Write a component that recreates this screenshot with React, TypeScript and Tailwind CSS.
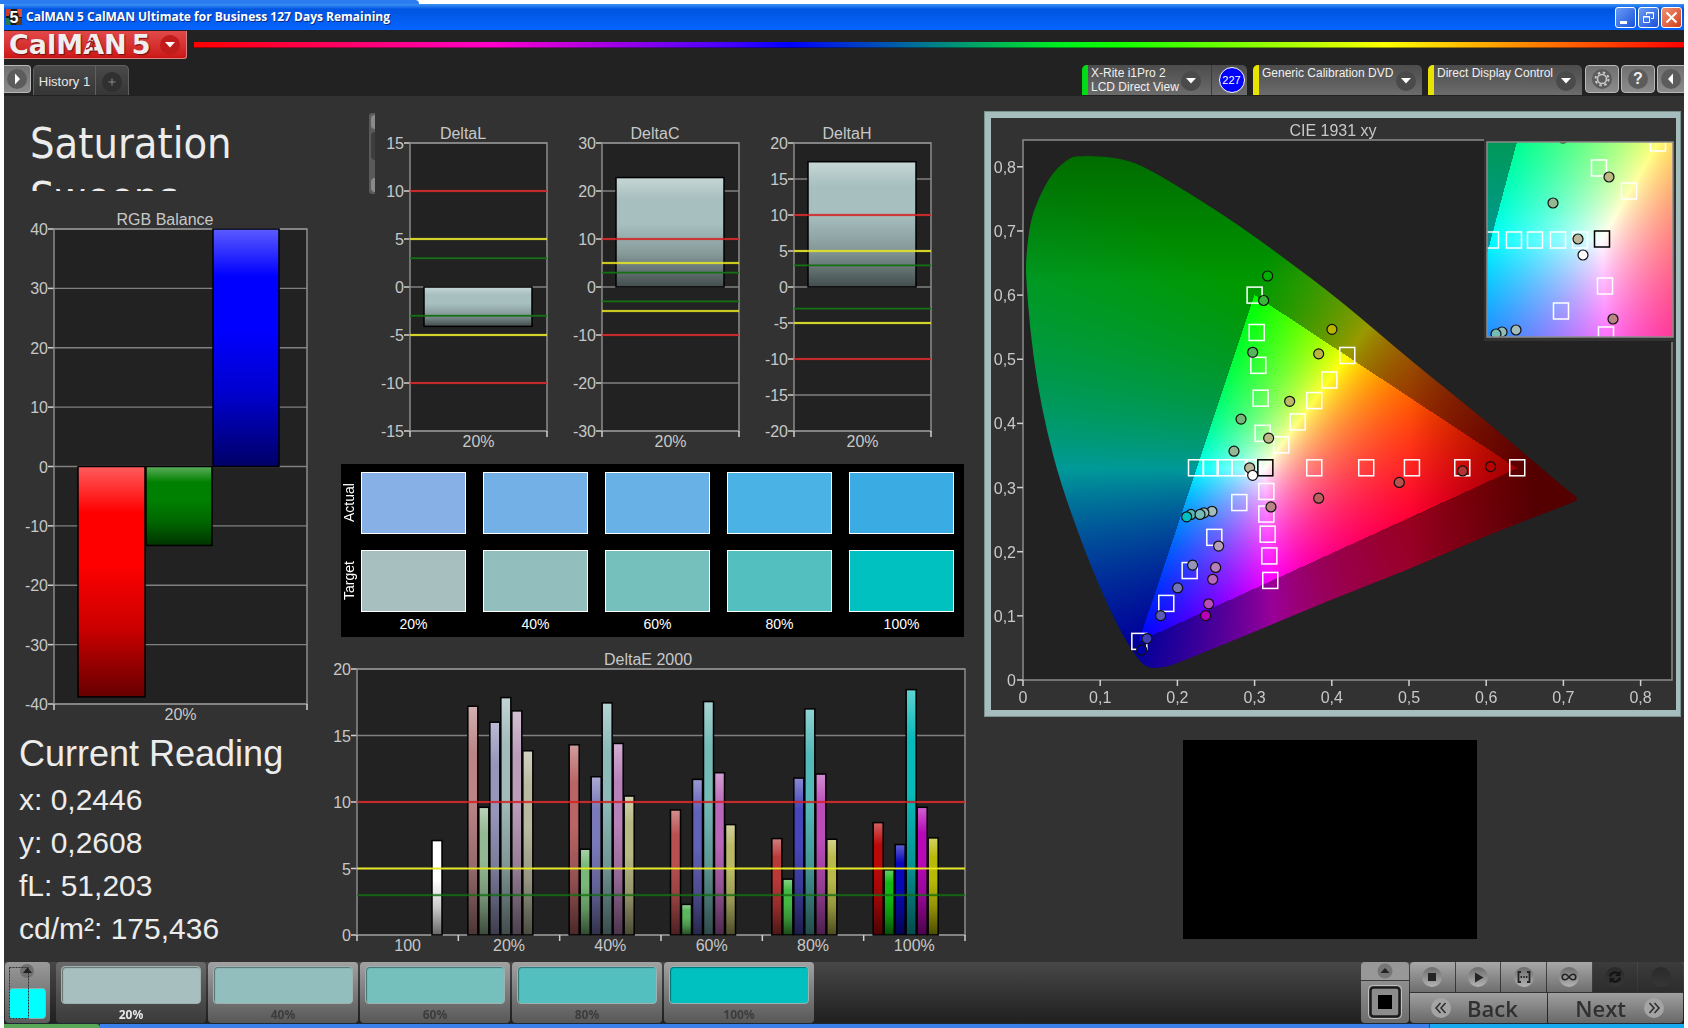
import React, { useEffect, useRef } from 'react';
import clsx from 'clsx';

type Bar = { x: number; width: number; value: number; color: string };

type ChartProps = {
  id: string;
  title: string;
  titleX: number;
  width: number;
  height: number;
  plot: { x: number; y: number; w: number; h: number };
  min: number;
  max: number;
  step: number;
  categories: string[];
  bars: Bar[];
  limits?: number[];
};

const LIMIT_COLORS: Record<number, string> = {
  10: '#d42020',
  5: '#e8e820',
  3: '#157015',
};

const BarChart: React.FC<ChartProps> = ({
  id,
  title,
  titleX,
  width,
  height,
  plot,
  min,
  max,
  step,
  categories,
  bars,
  limits = [],
}) => {
  const toY = (value: number) => plot.y + ((max - value) / (max - min)) * plot.h;
  const bottom = plot.y + plot.h;
  const right = plot.x + plot.w;
  const slot = plot.w / categories.length;

  const ticks: number[] = [];
  for (let v = min; v <= max; v += step) ticks.push(v);

  return (
    <svg viewBox={`0 0 ${width} ${height}`} className="block w-full" role="img" aria-label={title}>
      <defs>
        <linearGradient id={id} x1="0" y1="0" x2="0" y2="1">
          <stop offset="0" stopColor="#fff" stopOpacity="0.36" />
          <stop offset="0.2" stopColor="#fff" stopOpacity="0" />
          <stop offset="0.42" stopColor="#000" stopOpacity="0" />
          <stop offset="0.7" stopColor="#000" stopOpacity="0.2" />
          <stop offset="1" stopColor="#000" stopOpacity="0.6" />
        </linearGradient>
      </defs>
      <text x={titleX} y={plot.y - 4} textAnchor="middle" className="fill-[#c8c8c8] text-base">
        {title}
      </text>
      <rect x={plot.x} y={plot.y} width={plot.w} height={plot.h} fill="#222" />
      {ticks.map((v) => (
        <g key={v}>
          <line x1={plot.x} x2={right} y1={toY(v)} y2={toY(v)} stroke="#808080" strokeWidth="1.3" />
          <line x1={plot.x - 6} x2={plot.x} y1={toY(v)} y2={toY(v)} stroke="#d0d0d0" strokeWidth="1.5" />
          <text x={plot.x - 6} y={toY(v) + 6} textAnchor="end" className="fill-[#c8c8c8] text-base">
            {v}
          </text>
        </g>
      ))}
      <rect x={plot.x} y={plot.y} width={plot.w} height={plot.h} fill="none" stroke="#8c8c8c" strokeWidth="1.5" />
      {bars.map((bar, i) => {
        const top = toY(Math.max(bar.value, 0));
        const h = Math.abs(toY(bar.value) - toY(0));
        return (
          <g key={i}>
            <rect x={bar.x} y={top} width={bar.width} height={h} fill={bar.color} />
            <rect x={bar.x} y={top} width={bar.width} height={h} fill={`url(#${id})`} stroke="#000" strokeWidth="1.5" />
          </g>
        );
      })}
      {limits.map((v) => (
        <g key={v}>
          <line x1={plot.x} x2={right} y1={toY(v)} y2={toY(v)} stroke={LIMIT_COLORS[Math.abs(v)]} strokeWidth="2.6" strokeOpacity="0.35" />
          <line x1={plot.x} x2={right} y1={toY(v)} y2={toY(v)} stroke={LIMIT_COLORS[Math.abs(v)]} strokeWidth="1.4" />
        </g>
      ))}
      {categories.map((label, i) => (
        <g key={label}>
          <line x1={plot.x + slot * i} x2={plot.x + slot * i} y1={bottom} y2={bottom + 6} stroke="#d0d0d0" strokeWidth="1.5" />
          <text x={plot.x + slot * (i + 0.5)} y={bottom + 16} textAnchor="middle" className="fill-[#c8c8c8] text-base">
            {label}
          </text>
        </g>
      ))}
      <line x1={right} x2={right} y1={bottom} y2={bottom + 6} stroke="#d0d0d0" strokeWidth="1.5" />
    </svg>
  );
};

const RGB_BARS: Bar[] = [
  { x: 74, width: 67, value: -38.8, color: '#ff0000' },
  { x: 142, width: 66, value: -13.3, color: '#008000' },
  { x: 209, width: 66, value: 40, color: '#0000ff' },
];

const DELTAS = [
  { title: 'DeltaL', min: -15, max: 15, step: 5, value: -4.1, limits: [10, 5, 3, -3, -5, -10] },
  { title: 'DeltaC', min: -30, max: 30, step: 10, value: 22.8, limits: [10, 5, 3, -3, -5, -10] },
  { title: 'DeltaH', min: -20, max: 20, step: 5, value: 17.4, limits: [10, 5, 3, -3, -5, -10] },
];

// one row per saturation level: red, green, blue, cyan, magenta, yellow
const DELTA_E = [
  [17.2, 9.6, 16, 17.85, 16.85, 13.85],
  [14.3, 6.45, 11.9, 17.45, 14.4, 10.45],
  [9.4, 2.3, 11.7, 17.55, 12.2, 8.3],
  [7.25, 4.2, 11.8, 17, 12.1, 7.2],
  [8.45, 4.9, 6.8, 18.45, 9.6, 7.3],
];

const DELTA_E_COLORS = [
  ['#bb8585', '#94b894', '#9696bb', '#a2bbbb', '#b99db9', '#b9b9a0'],
  ['#b96565', '#78b878', '#7a7ab9', '#8dbab9', '#b981b9', '#b9b984'],
  ['#b95050', '#5cb85c', '#6262b9', '#74bab7', '#b968b9', '#b9b968'],
  ['#b93838', '#44b844', '#4646b9', '#54bab9', '#b94cb9', '#b9b94c'],
  ['#b90808', '#10b810', '#0808b9', '#08bab9', '#b908b9', '#b9b908'],
];

const E_SLOT = 608 / 6;
const DELTA_E_BARS: Bar[] = [
  { x: 103, width: 10, value: 7.1, color: '#ffffff' },
  ...DELTA_E.flatMap((row, level) =>
    row.map((value, i) => ({
      x: 28 + E_SLOT * (level + 1) + 9.5 + i * 11,
      width: 10,
      value,
      color: DELTA_E_COLORS[level][i],
    }))
  ),
];

const LEVELS = ['20%', '40%', '60%', '80%', '100%'];
const ACTUAL = ['bg-[#86b0e6]', 'bg-[#73b0e6]', 'bg-[#67b1e6]', 'bg-[#4ab2e5]', 'bg-[#3aace3]'];
const TARGET = ['bg-[#a7bfbe]', 'bg-[#92bfbe]', 'bg-[#75bfbd]', 'bg-[#53bfbf]', 'bg-[#00c0c0]'];

/* ---------- CIE 1931 chart ---------- */

const CIE_W = 685;
const CIE_H = 592;
const PLOT = { x: 32, y: 22, w: 650, h: 540 };
const INSET = { x: 496, y: 24, w: 186, h: 195 };
const X_SCALE = 772;
const Y_SCALE = 641.5;

const cieX = (x: number) => PLOT.x + x * X_SCALE;
const cieY = (y: number) => PLOT.y + PLOT.h - y * Y_SCALE;

// spectral locus outline, in plot pixels
const LOCUS = [
  [47, 17], [57, 16], [74, 16], [101, 19], [124, 28], [171, 56], [217, 86], [257, 115], [317, 160],
  [387, 220], [467, 284], [545, 351], [557, 359], [546, 364], [467, 394], [387, 429], [307, 460],
  [224, 495], [157, 522], [141, 528], [124, 528], [115, 519], [97, 491], [76, 446], [57, 398],
  [37, 341], [24, 292], [14, 242], [7, 189], [3, 138], [3, 118], [7, 82], [16, 57], [29, 33],
];

const RED = [0.64, 0.33];
const GREEN = [0.3, 0.6];
const BLUE = [0.15, 0.06];

const side = (a: number[], b: number[], x: number, y: number) =>
  (b[0] - a[0]) * (y - a[1]) - (b[1] - a[1]) * (x - a[0]);

function cieColor(x: number, y: number): [number, number, number] {
  const yy = Math.max(y, 0.001);
  const X = x / yy;
  const Z = (1 - x - yy) / yy;
  const r = Math.max(0, 3.2406 * X - 1.5372 - 0.4986 * Z);
  const g = Math.max(0, -0.9689 * X + 1.8758 + 0.0415 * Z);
  const b = Math.max(0, 0.0557 * X - 0.204 + 1.057 * Z);
  const peak = Math.max(r, g, b, 0.0001);
  const inside =
    side(RED, GREEN, x, y) >= 0 && side(GREEN, BLUE, x, y) >= 0 && side(BLUE, RED, x, y) >= 0;
  let level = inside ? 255 : 153;
  level *= 1 - Math.min(1, Math.max(0, (x - 0.5) / 0.16)) * 0.45;
  level *= 1 - Math.min(1, Math.max(0, (y - 0.62) / 0.2)) * 0.3;
  return [(r / peak) * level, (g / peak) * level, (b / peak) * level];
}

function gamut(w: number, h: number, toXy: (px: number, py: number) => [number, number]) {
  const layer = document.createElement('canvas');
  layer.width = w;
  layer.height = h;
  const ctx = layer.getContext('2d')!;
  const image = ctx.createImageData(w, h);
  for (let py = 0; py < h; py++) {
    for (let px = 0; px < w; px++) {
      const [x, y] = toXy(px + 0.5, py + 0.5);
      const [r, g, b] = cieColor(x, y);
      const i = (py * w + px) * 4;
      image.data[i] = r;
      image.data[i + 1] = g;
      image.data[i + 2] = b;
      image.data[i + 3] = 255;
    }
  }
  ctx.putImageData(image, 0, 0);
  return layer;
}

function paintCie(canvas: HTMLCanvasElement) {
  const ctx = canvas.getContext('2d')!;
  ctx.clearRect(0, 0, CIE_W, CIE_H);
  ctx.fillStyle = '#222';
  ctx.fillRect(PLOT.x, PLOT.y, PLOT.w, PLOT.h);

  const full = gamut(PLOT.w, PLOT.h, (px, py) => [px / X_SCALE, (PLOT.h - py) / Y_SCALE]);
  ctx.save();
  ctx.translate(PLOT.x, PLOT.y);
  ctx.beginPath();
  LOCUS.forEach(([px, py], i) => {
    const [nx, ny] = LOCUS[(i + 1) % LOCUS.length];
    const mx = (px + nx) / 2;
    const my = (py + ny) / 2;
    if (i === 0) ctx.moveTo(mx, my);
    else ctx.quadraticCurveTo(px, py, mx, my);
  });
  ctx.quadraticCurveTo(LOCUS[0][0], LOCUS[0][1], (LOCUS[0][0] + LOCUS[1][0]) / 2, (LOCUS[0][1] + LOCUS[1][1]) / 2);
  ctx.clip();
  ctx.drawImage(full, 0, 0);
  ctx.restore();
}

function paintInset(canvas: HTMLCanvasElement) {
  const ctx = canvas.getContext('2d')!;
  const zoomed = gamut(INSET.w, INSET.h, (px, py) => [
    0.3127 + (px + INSET.x - 611) / 1262,
    0.329 - (py + INSET.y - 121) / 1310,
  ]);
  ctx.fillStyle = '#323232';
  ctx.fillRect(INSET.x - 3, INSET.y - 4, INSET.w + 6, INSET.h + 8);
  ctx.drawImage(zoomed, INSET.x, INSET.y);
}

const TARGETS = [
  [0.3, 0.6], [0.3027, 0.5417], [0.3048, 0.4905], [0.3078, 0.4393], [0.3104, 0.3845],
  [0.42, 0.5059], [0.3968, 0.4677], [0.3773, 0.4356], [0.3558, 0.4023], [0.3346, 0.3666],
  [0.2241, 0.3308], [0.2431, 0.3308], [0.2612, 0.3308], [0.2802, 0.3308], [0.298, 0.3308],
  [0.3773, 0.3308], [0.4446, 0.3308], [0.5038, 0.3308], [0.569, 0.3308], [0.6402, 0.3308],
  [0.3152, 0.2939], [0.3152, 0.2587], [0.3169, 0.2273], [0.3191, 0.1934], [0.3203, 0.1552],
  [0.2802, 0.2766], [0.2478, 0.2224], [0.2159, 0.1706], [0.1856, 0.1194], [0.1507, 0.0602],
];

const READINGS: [number, number, string][] = [
  [0.3169, 0.6298, '#00b000'], [0.3117, 0.5916, '#38b838'], [0.2975, 0.5108, '#58b458'],
  [0.2824, 0.4067, '#78b478'], [0.2733, 0.3567, '#94b894'],
  [0.4002, 0.5466, '#b8b400'], [0.383, 0.5084, '#b8b444'], [0.3454, 0.4344, '#bcb868'],
  [0.3182, 0.3771, '#bcb884'], [0.2936, 0.3308, '#bcb89c'], [0.2975, 0.3191, '#ffffff'],
  [0.2448, 0.263, '#a4bcbc'], [0.2344, 0.2606, '#90bcbc'], [0.2176, 0.2581, '#54b8b8'],
  [0.2293, 0.2581, '#74bcb8'], [0.212, 0.2544, '#00c0c0'],
  [0.3212, 0.2698, '#b88484'], [0.383, 0.2834, '#b86060'], [0.4874, 0.308, '#b85050'],
  [0.5694, 0.3259, '#b03434'], [0.6057, 0.3327, '#b80000'],
  [0.2534, 0.2088, '#b8a0b8'], [0.2495, 0.1755, '#b880b8'], [0.2457, 0.157, '#b868b8'],
  [0.2405, 0.1188, '#b84cb8'], [0.2366, 0.1003, '#b800b8'],
  [0.2197, 0.1792, '#9494b8'], [0.2003, 0.1435, '#7474b8'], [0.1783, 0.1003, '#5c5cb8'],
  [0.1606, 0.0646, '#4040b8'], [0.1537, 0.0467, '#0000a8'],
];

const INSET_TARGETS = [
  [667, 25], [608, 50], [638, 73], [500, 122], [523, 122], [544, 122], [567, 122], [589, 122],
  [614, 168], [570, 193], [615, 217],
];

const INSET_READINGS: [number, number, string][] = [
  [572, 20, '#78b478'], [618, 59, '#bcb884'], [562, 85, '#94b894'], [587, 121, '#bcb89c'],
  [592, 137, '#ffffff'], [622, 201, '#b88484'], [525, 212, '#a4bcbc'], [511, 214, '#90bcbc'],
  [505, 216, '#74bcb8'],
];

const Target: React.FC<{ x: number; y: number; color?: string }> = ({ x, y, color = '#fff' }) => (
  <rect x={x - 7.5} y={y - 8} width="15" height="16" fill="none" stroke={color} strokeWidth="1.5" />
);

const Reading: React.FC<{ x: number; y: number; color: string }> = ({ x, y, color }) => (
  <circle cx={x} cy={y} r="5" fill={color} stroke="#101010" strokeWidth="1.2" />
);

const TENTHS = [0, 1, 2, 3, 4, 5, 6, 7, 8];
const tenthLabel = (n: number) => (n === 0 ? '0' : `0,${n}`);

const CieChart: React.FC = () => {
  const canvasRef = useRef<HTMLCanvasElement>(null);

  useEffect(() => {
    if (!canvasRef.current) return;
    paintCie(canvasRef.current);
    paintInset(canvasRef.current);
  }, []);

  return (
    <div className="grid">
      <canvas ref={canvasRef} width={CIE_W} height={CIE_H} className="[grid-area:1/1] w-full" />
      <svg viewBox={`0 0 ${CIE_W} ${CIE_H}`} className="[grid-area:1/1] w-full" role="img" aria-label="CIE 1931 xy">
        <defs>
          <clipPath id="inset-clip">
            <rect x={INSET.x} y={INSET.y} width={INSET.w} height={INSET.h} />
          </clipPath>
        </defs>
        <text x="342" y="18" textAnchor="middle" className="fill-[#c8c8c8] text-base">
          CIE 1931 xy
        </text>
        <path
          d={`M${INSET.x - 3} ${PLOT.y}H${PLOT.x}V${PLOT.y + PLOT.h}H${PLOT.x + PLOT.w - 1}V${INSET.y + INSET.h + 5}`}
          fill="none"
          stroke="#8c8c8c"
          strokeWidth="1.5"
        />
        {TENTHS.map((n) => (
          <g key={n} className="fill-[#c8c8c8] text-base">
            <line x1={PLOT.x - 6} x2={PLOT.x} y1={cieY(n / 10)} y2={cieY(n / 10)} stroke="#d0d0d0" strokeWidth="1.5" />
            <text x={PLOT.x - 7} y={cieY(n / 10) + 6} textAnchor="end">
              {tenthLabel(n)}
            </text>
            <line x1={cieX(n / 10)} x2={cieX(n / 10)} y1={PLOT.y + PLOT.h} y2={PLOT.y + PLOT.h + 6} stroke="#d0d0d0" strokeWidth="1.5" />
            <text x={cieX(n / 10)} y={PLOT.y + PLOT.h + 23} textAnchor="middle">
              {tenthLabel(n)}
            </text>
          </g>
        ))}
        {TARGETS.map(([x, y], i) => (
          <Target key={i} x={cieX(x)} y={cieY(y)} />
        ))}
        <Target x={cieX(0.3139)} y={cieY(0.3308)} color="#000" />
        {READINGS.map(([x, y, color], i) => (
          <Reading key={i} x={cieX(x)} y={cieY(y)} color={color} />
        ))}
        <g clipPath="url(#inset-clip)">
          {INSET_TARGETS.map(([x, y], i) => (
            <Target key={i} x={x} y={y} />
          ))}
          <Target x={611} y={121} color="#000" />
          {INSET_READINGS.map(([x, y, color], i) => (
            <Reading key={i} x={x} y={y} color={color} />
          ))}
        </g>
        <rect x={INSET.x} y={INSET.y} width={INSET.w} height={INSET.h} fill="none" stroke="#8c8c8c" strokeWidth="1.5" />
      </svg>
    </div>
  );
};

/* ---------- window chrome ---------- */

const TitleBar: React.FC = () => (
  <div className="flex h-[26px] items-center bg-linear-to-b from-[#3c92f5] via-[#0055e0] via-20% to-[#0665ff] px-0.5">
    <svg viewBox="0 0 16 16" className="h-4 w-4">
      <rect width="16" height="16" fill="#181818" />
      <path d="M0 0h5l-2 7H0z" fill="#d23a20" />
      <path d="M11 0h5v8h-3z" fill="#e05030" />
      <path d="M0 9h3l2 7H0z" fill="#287a48" />
      <path d="M13 9h3v7h-6z" fill="#5a3a20" />
      <text x="8" y="14" textAnchor="middle" className="fill-white text-base font-bold">
        5
      </text>
    </svg>
    <h1 className="ml-1 flex-1 text-xs font-bold text-white font-['Open_Sans',sans-serif] [text-shadow:1px_1px_0_#0a2a80]">
      CalMAN 5 CalMAN Ultimate for Business 127 Days Remaining
    </h1>
    <div className="flex gap-0.5">
      <button aria-label="Minimize" className="flex h-[21px] w-[21px] rounded-[3px] border border-white bg-linear-to-br from-[#6a9bf5] to-[#1c50d8]">
        <svg viewBox="0 0 19 19">
          <path d="M4 13h7v3H4z" fill="#fff" />
        </svg>
      </button>
      <button aria-label="Restore" className="flex h-[21px] w-[21px] rounded-[3px] border border-white bg-linear-to-br from-[#6a9bf5] to-[#1c50d8]">
        <svg viewBox="0 0 19 19" fill="none" stroke="#fff">
          <path d="M7.5 7V4.500h7v6H12M7 5h8" />
          <path d="M4.500 8.500h6v6h-6zM4 9h7" />
        </svg>
      </button>
      <button aria-label="Close" className="flex h-[21px] w-[21px] rounded-[3px] border border-white bg-linear-to-br from-[#f09070] to-[#d03c14]">
        <svg viewBox="0 0 19 19" stroke="#fff" strokeWidth="2">
          <path d="M4.500 4.500l10 10M14.500 4.500l-10 10" />
        </svg>
      </button>
    </div>
  </div>
);

const Caret: React.FC<{ className?: string }> = ({ className }) => (
  <span className={clsx('flex h-5 w-5 shrink-0 items-center justify-center rounded-full', className)}>
    <svg viewBox="0 0 12 6" className="h-1.5 w-3">
      <path d="M1 0h10L6 5.500z" fill="#fff" />
    </svg>
  </span>
);

const LogoRow: React.FC = () => (
  <div className="flex h-[35px] items-start">
    <button
      aria-label="CalMAN menu"
      className="mt-px flex h-7 w-[183px] items-center justify-between rounded-br-[3px] border-r border-b border-[#d88080] bg-linear-to-b from-[#e04848] to-[#cc1414] pr-1.5 pl-[5px]"
    >
      <span className="relative text-[27px] leading-6 font-bold text-[#f0eeee] font-['DejaVu_Sans',sans-serif] [text-shadow:1px_1px_1px_#701010]">
        CalMAN
        <svg viewBox="0 0 12 14" className="absolute top-1 left-[76px] h-3.5 w-3" fill="none" stroke="#a01818" strokeWidth="1.5">
          <circle cx="7" cy="2" r="1.400" fill="#a01818" stroke="none" />
          <path d="M2 6l3-2 2 1 3 2M6.500 5L5.500 8.500l3 2v3M5.500 8.500L4 11l-3 1" />
        </svg>
      </span>
      <span className="mr-auto ml-[5px] text-[27px] leading-6 font-bold text-[#f0eeee] font-['DejaVu_Sans',sans-serif] [text-shadow:1px_1px_1px_#701010]">
        5
      </span>
      <Caret className="bg-[#c01c1c]" />
    </button>
    <div className="mt-3 ml-[7px] h-1.5 flex-1 border-b border-black/40 bg-[linear-gradient(to_right,#f00,#f0c_20%,#40f_36%,#00f_40%,#0e2_58%,#1f0_62%,#ff0_80%,#f00)]" />
  </div>
);

type SourceProps = { label: string; second?: string; stripe: string; className: string; children?: React.ReactNode };

const SourceTab: React.FC<SourceProps> = ({ label, second, stripe, className, children }) => (
  <div className={clsx('flex h-[30px] overflow-hidden rounded-t-[5px] bg-linear-to-b from-[#4c4c4c] to-[#6c6c6c]', className)}>
    <span className={clsx('w-1.5 shrink-0', stripe)} />
    <button
      aria-haspopup="menu"
      className={clsx('flex flex-1 justify-between pl-[3px] text-left text-xs text-[#f0f0f0]', children ? 'pr-2.5' : 'pr-1.5')}
    >
      <span className="pt-px leading-[14px] whitespace-nowrap">
        {label}
        {second && <span className="block">{second}</span>}
      </span>
      <Caret className="mt-1.5 -ml-2 self-start bg-[#4a4a4a]" />
    </button>
    {children}
  </div>
);

const ToolButton: React.FC<{ label: string; className?: string; children: React.ReactNode }> = ({ label, className, children }) => (
  <button
    aria-label={label}
    className={clsx('flex h-7 items-center justify-center border border-[#b8b8b8] bg-linear-to-b from-[#707070] to-[#8c8c8c]', className)}
  >
    <span className="flex h-5 w-5 items-center justify-center rounded-full bg-[#5c5c5c]">{children}</span>
  </button>
);

const TabRow: React.FC = () => (
  <div className="flex h-[31px] items-start">
    <ToolButton label="Show workflow" className="w-[27px] rounded-r border-l-0">
      <svg viewBox="0 0 8 12" className="h-3 w-2">
        <path d="M2 0.500v11l5-5.500z" fill="#fff" />
      </svg>
    </ToolButton>
    <div className="ml-0.5 flex h-[30px] rounded-t-[5px] border border-b-0 border-[#606060] bg-linear-to-b from-[#4a4a4a] to-[#363636]">
      <button className="w-[62px] border-r border-[#606060] pt-0.5 text-[13px] text-[#e8e8e8]">History 1</button>
      <button aria-label="Add history" className="flex w-8 items-center justify-center pt-0.5">
        <svg viewBox="0 0 20 20" className="h-5 w-5">
          <circle cx="10" cy="10" r="10" fill="#303030" />
          <path d="M6.500 10h7M10 6.500v7" stroke="#888" />
        </svg>
      </button>
    </div>
    <div className="ml-auto flex">
      <SourceTab label="X-Rite i1Pro 2" second="LCD Direct View" stripe="bg-[#00dc14]" className="w-[165px]">
        <span className="flex w-9 items-center justify-center border-l border-[#3c3c3c] pl-1">
          <span className="flex h-[26px] w-[26px] items-center justify-center rounded-full border border-white bg-[#0000ff] text-[11px] text-white">
            227
          </span>
        </span>
      </SourceTab>
      <SourceTab label="Generic Calibration DVD" stripe="bg-[#e8e400]" className="ml-1.5 w-[169px]" />
      <SourceTab label="Direct Display Control" stripe="bg-[#e8e400]" className="ml-1.5 w-[154px]" />
      <div className="ml-[3px] flex gap-0.5">
        <ToolButton label="Settings" className="w-[34px] rounded">
          <svg viewBox="0 0 16 16" className="h-4 w-4" fill="none" stroke="#c8c8c8">
            <circle cx="8" cy="8" r="4.500" strokeWidth="1.600" />
            <circle cx="8" cy="8" r="6.500" strokeWidth="2" strokeDasharray="2.500 2.600" />
          </svg>
        </ToolButton>
        <ToolButton label="Help" className="w-[34px] rounded">
          <span className="text-base leading-5 font-bold text-[#f0f0f0]">?</span>
        </ToolButton>
        <ToolButton label="Show panel" className="w-[27px] rounded-l border-r-0">
          <svg viewBox="0 0 8 12" className="h-3 w-2">
            <path d="M6 0.500v11L1 6z" fill="#fff" />
          </svg>
        </ToolButton>
      </div>
    </div>
  </div>
);

/* ---------- workflow page ---------- */

const ReadingColumn: React.FC = () => (
  <section className="pt-5">
    <h2 className="h-[75px] overflow-hidden pl-[26px] text-[43px] leading-[54px] text-[#ececec] font-['DejaVu_Sans_Condensed','DejaVu_Sans',sans-serif]">
      Saturation
      <br />
      Sweeps
    </h2>
    <BarChart
      id="rgb-sheen"
      title="RGB Balance"
      titleX={161}
      width={325}
      height={541}
      plot={{ x: 50, y: 38, w: 253, h: 475 }}
      min={-40}
      max={40}
      step={10}
      categories={['20%']}
      bars={RGB_BARS}
    />
    <div className="pl-[15px] text-[#ececec]">
      <h2 className="mb-0.5 text-4xl leading-[44px]">Current Reading</h2>
      <p className="text-[30px] leading-[43px]">x: 0,2446</p>
      <p className="text-[30px] leading-[43px]">y: 0,2608</p>
      <p className="text-[30px] leading-[43px]">fL: 51,203</p>
      <p className="text-[30px] leading-[43px]">cd/m²: 175,436</p>
    </div>
  </section>
);

const SwatchRow: React.FC<{ label: string; colors: string[] }> = ({ label, colors }) => (
  <>
    <span className="w-4 rotate-180 justify-self-start text-center text-sm leading-4 text-white [writing-mode:vertical-rl]">{label}</span>
    {colors.map((color) => (
      <span key={color} className={clsx('h-[62px] border border-white', color)} />
    ))}
  </>
);

const DeltaColumn: React.FC = () => (
  <section className="pt-[17px]">
    <div className="flex items-start pr-[18px] pl-10">
      <div className="flex h-[81px] w-1.5 shrink-0 flex-col justify-between rounded-l-[3px] bg-[#5a5a5a] py-0.5 pl-0.5">
        <span className="h-3.5 rounded-l-full bg-[#8a8a8a]" />
        <span className="mb-4 h-7 rounded-l-full bg-[#3e3e3e]" />
        <span className="h-3.5 rounded-l-full bg-[#8a8a8a]" />
      </div>
      <div className="grid flex-1 grid-cols-3 pt-[3px]">
        {DELTAS.map((d) => (
          <BarChart
            key={d.title}
            id={`${d.title}-sheen`}
            title={d.title}
            titleX={88}
            width={192}
            height={335}
            plot={{ x: 35, y: 27, w: 137, h: 288 }}
            min={d.min}
            max={d.max}
            step={d.step}
            categories={['20%']}
            bars={[{ x: 49, width: 108, value: d.value, color: '#a7bfbf' }]}
            limits={d.limits}
          />
        ))}
      </div>
    </div>
    <div className="mt-[13px] mr-[5px] ml-3 grid grid-cols-[3px_repeat(5,1fr)] gap-x-[17px] gap-y-4 bg-black pt-2 pr-2.5 pb-1">
      <SwatchRow label="Actual" colors={ACTUAL} />
      <SwatchRow label="Target" colors={TARGET} />
      <span className="-mt-4" />
      {LEVELS.map((level) => (
        <span key={level} className="-mt-4 pt-[3px] text-center text-sm leading-[18px] text-white">
          {level}
        </span>
      ))}
    </div>
    <div className="pt-2">
      <BarChart
        id="delta-e-sheen"
        title="DeltaE 2000"
        titleX={319}
        width={640}
        height={312}
        plot={{ x: 28, y: 24, w: 608, h: 266 }}
        min={0}
        max={20}
        step={5}
        categories={['100', ...LEVELS]}
        bars={DELTA_E_BARS}
        limits={[10, 5, 3]}
      />
    </div>
  </section>
);

const CieColumn: React.FC = () => (
  <section className="pt-[15px] pr-[3px] pl-[15px]">
    <div className="border-[7px] border-r-[5px] border-[#a6bdbd] bg-[#323232] outline-1 -outline-offset-1 outline-[#7c9090]">
      <CieChart />
    </div>
    <div className="mt-[23px] ml-[199px] h-[199px] w-[294px] bg-black" />
  </section>
);

/* ---------- bottom bar ---------- */

const LevelButton: React.FC<{ label: string; color: string; active?: boolean }> = ({ label, color, active }) => (
  <button
    className={clsx(
      'flex h-[61px] w-[150px] flex-col rounded bg-linear-to-b px-[5px] pt-1 text-xs font-bold font-["Noto_Sans",sans-serif]',
      active ? 'from-[#6a6a6a] to-[#3a3a3a] text-[#e8e8e8]' : 'from-[#a2a2a2] to-[#585858] text-[#3c3c3c]'
    )}
  >
    <span className={clsx('h-[38px] w-full rounded border border-[#9fb0b0] shadow-[inset_1px_1px_1px_rgba(0,0,0,0.4)]', color)} />
    <span className="w-full pt-[3px] text-center leading-4">{label}</span>
  </button>
);

const TransportButton: React.FC<{ label: string; disabled?: boolean; children?: React.ReactNode }> = ({ label, disabled, children }) => (
  <button
    aria-label={label}
    disabled={disabled}
    className={clsx(
      'flex h-[30px] flex-1 items-center justify-center bg-linear-to-b',
      disabled ? 'from-[#3c3c3c] to-[#2c2c2c]' : 'from-[#a8a8a8] to-[#6e6e6e]'
    )}
  >
    <span
      className={clsx(
        'flex h-5 w-5 items-center justify-center rounded-full bg-linear-to-b',
        disabled ? 'from-[#2a2a2a] to-[#363636]' : 'from-[#6c6c6c] to-[#b4b4b4]'
      )}
    >
      <svg viewBox="0 0 20 20" className="h-5 w-5" fill="none" stroke="#242424">
        {children}
      </svg>
    </span>
  </button>
);

const BottomBar: React.FC = () => (
  <footer className="flex h-[62px] items-start border-b border-[#202830] bg-linear-to-b from-[#484848] to-[#202020] px-px">
    <button aria-label="Pattern window" className="flex h-[61px] w-[45px] flex-col items-center rounded bg-linear-to-b from-[#9a9a9a] to-[#5c5c5c] px-1 pt-0.5">
      <svg viewBox="0 0 37 58" className="h-[58px] w-[37px]">
        <circle cx="18" cy="7" r="7" fill="#707070" />
        <path d="M14 9h9l-4.500-5.500z" fill="#202020" />
        <rect x="0.500" y="24.500" width="36" height="30" rx="3" fill="#0ff" stroke="#8ab0b0" />
        <path d="M0.500 3.500h19v51h-19z" fill="none" stroke="#303030" strokeDasharray="2 1" />
      </svg>
    </button>
    <div className="ml-1.5 flex gap-0.5">
      {LEVELS.map((level, i) => (
        <LevelButton key={level} label={level} color={TARGET[i]} active={i === 0} />
      ))}
    </div>
    <div className="ml-auto flex gap-px">
      <div className="flex w-12 flex-col gap-px">
        <button aria-label="Expand" className="flex h-[18px] items-center justify-center rounded-t bg-[#989898]">
          <svg viewBox="0 0 16 16" className="h-4 w-4">
            <circle cx="8" cy="8" r="7.500" fill="#767676" />
            <path d="M3.500 10h9L8 5z" fill="#242424" />
          </svg>
        </button>
        <button aria-label="Read single" className="flex h-[42px] items-center justify-center rounded-b bg-linear-to-b from-[#909090] to-[#6c6c6c]">
          <svg viewBox="0 0 34 34" className="h-[34px] w-[34px]">
            <rect x="0.500" y="0.500" width="33" height="33" rx="4" fill="none" stroke="#c0c0c0" />
            <rect x="2.500" y="2.500" width="29" height="29" rx="3" fill="#8c8c8c" stroke="#1c1c1c" strokeWidth="2.500" />
            <path d="M10 10h14v14H10z" fill="#000" />
          </svg>
        </button>
      </div>
      <div className="flex w-[273px] flex-col gap-px">
        <div className="flex gap-px overflow-hidden rounded-t">
          <TransportButton label="Stop">
            <path d="M6 6h8v8H6z" fill="#242424" stroke="none" />
          </TransportButton>
          <TransportButton label="Play">
            <path d="M7 5.500v10l8.500-5z" fill="#242424" stroke="none" />
          </TransportButton>
          <TransportButton label="Read series">
            <path d="M7 5H4.500v10H7M13 5h2.500v10H13" strokeWidth="1.800" />
            <path d="M6.500 10h7" strokeWidth="1.800" strokeDasharray="1.500 1.200" />
          </TransportButton>
          <TransportButton label="Read continuous">
            <path d="M10 10C8 7.500 7 7.200 6 7.200a2.800 2.800 0 000 5.600c1 0 2-.3 4-2.800s3-2.800 4-2.800a2.800 2.800 0 010 5.600c-1 0-2-.3-4-2.800z" strokeWidth="1.600" />
          </TransportButton>
          <TransportButton label="Refresh" disabled>
            <path d="M5 9.500C5.500 5.500 11 4 13.500 7M15 10.500c-.5 4-6 5.500-8.500 2.500" stroke="#141414" strokeWidth="2.200" />
            <path d="M15.500 3.500v5.500H10zM4.500 16.500V11H10z" fill="#141414" stroke="none" />
          </TransportButton>
          <TransportButton label="Record" disabled />
        </div>
        <div className="flex gap-px overflow-hidden rounded-b text-[22px] leading-[30px] font-semibold text-[#303030] font-['Open_Sans',sans-serif]">
          <button className="flex h-[30px] flex-1 items-center bg-linear-to-b from-[#a0a0a0] to-[#686868] pl-[21px]">
            <svg viewBox="0 0 20 20" className="h-5 w-5" fill="none" stroke="#2c2c2c" strokeWidth="1.500">
              <circle cx="10" cy="10" r="10" fill="#a4a4a4" stroke="none" />
              <path d="M9.500 5L5 10l4.500 5M14.500 5L10 10l4.500 5" />
            </svg>
            <span className="ml-4">Back</span>
          </button>
          <button className="flex h-[30px] flex-1 items-center justify-end bg-linear-to-b from-[#a0a0a0] to-[#686868] pr-[19px]">
            <span className="mr-[18px]">Next</span>
            <svg viewBox="0 0 20 20" className="h-5 w-5" fill="none" stroke="#2c2c2c" strokeWidth="1.500">
              <circle cx="10" cy="10" r="10" fill="#a4a4a4" stroke="none" />
              <path d="M5.500 5l4.500 5-4.500 5M10.500 5l4.500 5-4.500 5" />
            </svg>
          </button>
        </div>
      </div>
    </div>
  </footer>
);

const App: React.FC = () => (
  <div className="flex min-h-screen flex-col bg-white font-['Liberation_Sans',Arial,sans-serif]">
    <div className="h-1 w-[419px] rounded-tr bg-[#2a7cf0]" />
    <div className="mr-1 ml-1 flex flex-1 flex-col bg-[#323232]">
      <TitleBar />
      <header className="bg-[#222]">
        <LogoRow />
        <TabRow />
      </header>
      <main className="grid flex-1 grid-cols-[325fr_640fr_715fr] items-start">
        <ReadingColumn />
        <DeltaColumn />
        <CieColumn />
      </main>
      <BottomBar />
      <div className="flex h-1">
        <span className="w-24 rounded-tr-sm bg-[#58a858]" />
        <span className="flex-1 bg-[#3c80ec]" />
        <span className="w-[255px] border-l border-[#1050a0] bg-[#18a8f0]" />
      </div>
    </div>
  </div>
);

export default App;
